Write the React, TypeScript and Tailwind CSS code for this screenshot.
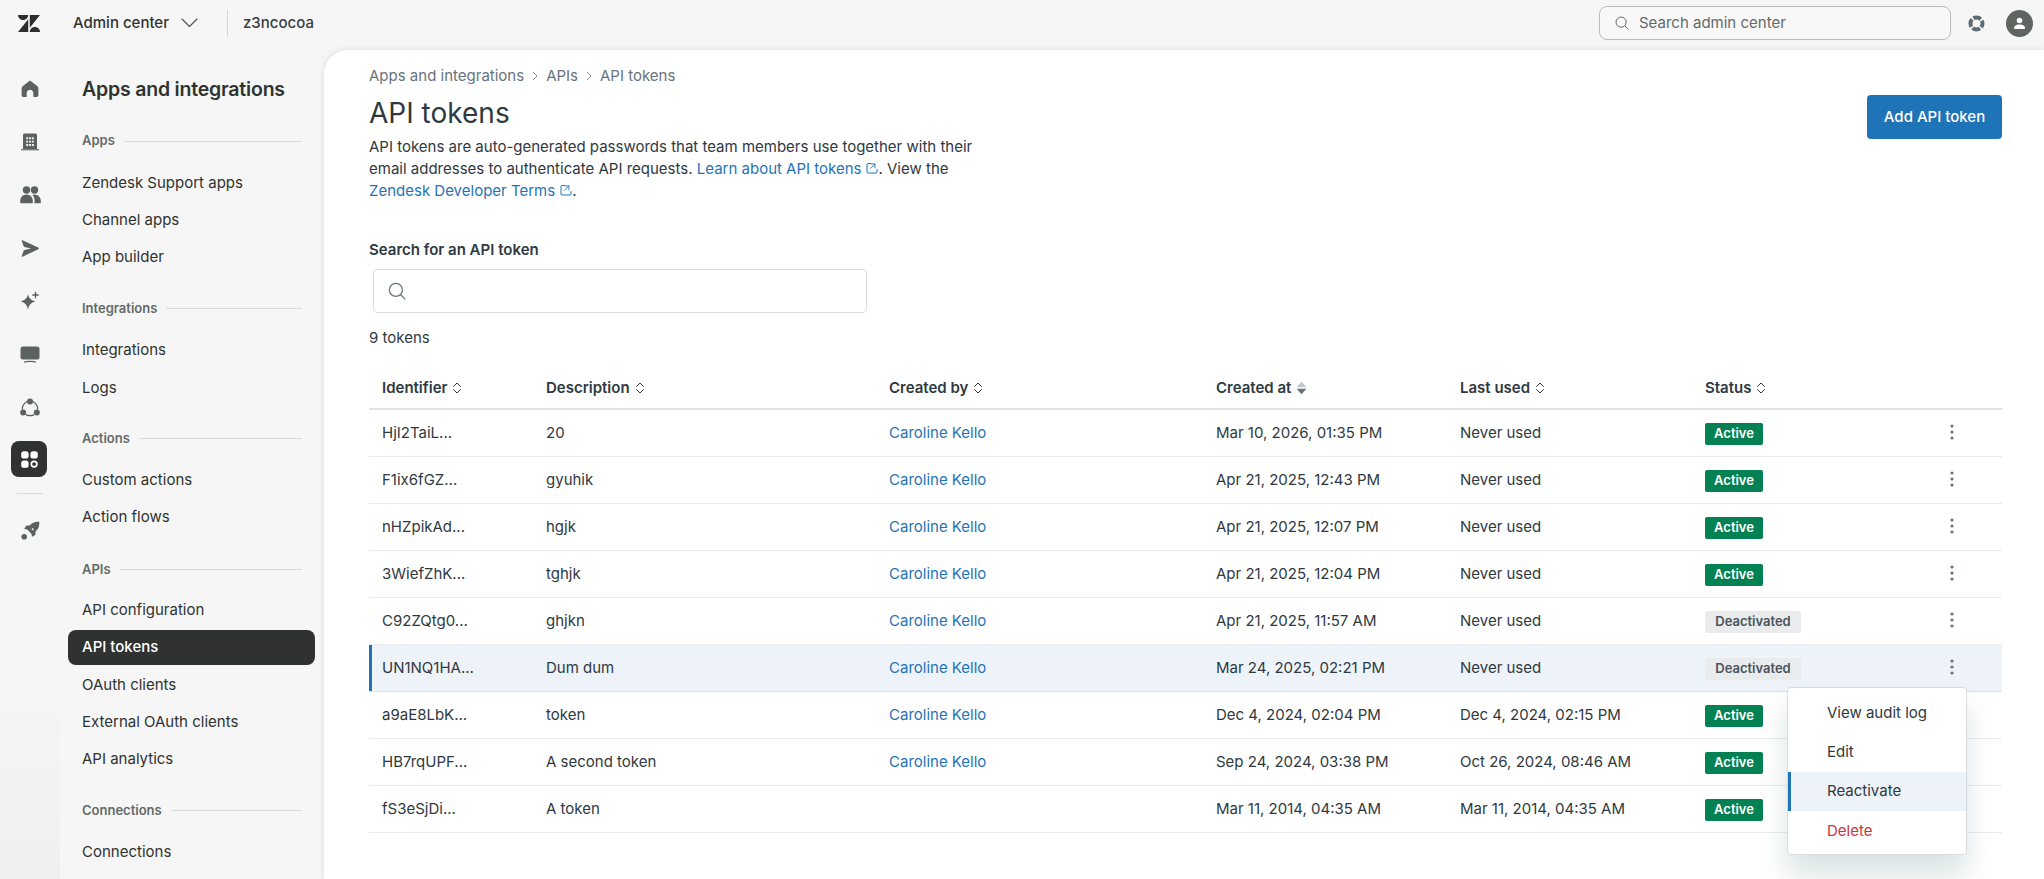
import React from "react";

const Sort = () => (
  <svg width="10" height="14" viewBox="0 0 10 14" fill="none" stroke="#2f3941" strokeWidth="1" className="ml-[5px] shrink-0">
    <path d="M1.500 5.500L5 2l3.500 3.500M1.500 8.500L5 12l3.500-3.500" strokeLinecap="round" strokeLinejoin="round" />
  </svg>
);
const SortDown = () => (
  <svg width="11" height="14" viewBox="0 0 11 14" className="ml-[5px] shrink-0">
    <path d="M5.500 .8L10.500 6.300H.5z" fill="#c2c8cc" />
    <path d="M5.500 13.200L10.500 7.700H.5z" fill="#68737d" />
  </svg>
);
const Ext = () => (
  <svg width="12" height="12" viewBox="0 0 12 12" fill="none" stroke="#1f73b7" strokeWidth="1" className="inline-block ml-[5px] -mt-[3px]">
    <path d="M4.500 1.500H2a1 1 0 00-1 1v7.500a1 1 0 001 1h8a1 1 0 001-1V7.500" strokeLinecap="round" />
    <path d="M6.500 1h4.500v4.500M11 1L6 6" transform="translate(-1 1) scale(.9)" strokeLinecap="round" />
  </svg>
);
const Search = ({ size, color }: { size: number; color: string }) => (
  <svg width={size} height={size} viewBox="0 0 16 16" fill="none" stroke={color} strokeWidth="1.100" className="shrink-0">
    <circle cx="7" cy="7" r="5.800" />
    <path d="M11.300 11.300l3.700 3.700" strokeLinecap="round" />
  </svg>
);

const I = "#5c635f";
const Home = () => (
  <svg width="18" height="18" viewBox="0 0 18 18"><path fill={I} d="M9 .6L1.600 6.200C.9 6.800.6 7.400.6 8.300V15c0 1.200.9 2.100 2 2.100h2.200c.5 0 .9-.4.9-.9v-3.100C5.700 11.200 7.200 9.800 9 9.800s3.300 1.400 3.300 3.300v3.100c0 .5.400.9.900.9h2.200c1.100 0 2-.9 2-2.100V8.300c0-.9-.3-1.500-1-2.100L9 .6z" /></svg>
);
const Building = () => (
  <svg width="20" height="18" viewBox="0 0 20 18">
    <path fill={I} d="M4.500.5h11c.8 0 1.500.7 1.500 1.500v14H3V2c0-.8.700-1.500 1.500-1.500z" />
    <path fill={I} d="M1 16.200h18v1.100H1z" />
    <path fill="#f6f6f6" d="M6.200 4.300h1.900v1.900H6.200zM9.050 4.300h1.900v1.900h-1.900zM11.900 4.300h1.900v1.900h-1.900zM6.200 7.700h1.900v1.900H6.200zM9.050 7.700h1.900v1.900h-1.900zM11.900 7.700h1.900v1.900h-1.900zM6.200 11.100h1.900v1.900H6.200zM9.050 11.100h1.900v1.900h-1.900zM11.900 11.100h1.900v1.900h-1.900z" />
  </svg>
);
const People = () => (
  <svg width="21" height="18" viewBox="0 0 21 18">
    <circle cx="6.500" cy="4" r="3.700" fill={I} />
    <circle cx="14.500" cy="4" r="3.700" fill={I} />
    <path fill={I} d="M6.500 8.500c3.500 0 6.300 2.800 6.300 6.200v1.800c0 .4-.3.700-.7.700H.9c-.4 0-.7-.3-.7-.7v-1.800c0-3.400 2.800-6.200 6.300-6.200z" />
    <path fill={I} d="M14.500 8.500c3.500 0 6.300 2.800 6.300 6.200v1.800c0 .4-.3.700-.7.700h-5.600v-3.100c0-1.900-.8-3.700-2.200-5 .7-.4 1.400-.6 2.200-.6z" />
  </svg>
);
const Send = () => (
  <svg width="18" height="17" viewBox="0 0 18 17"><path fill={I} d="M1.500.3l15.700 7.200c.8.400.8 1.400 0 1.700L1.500 16.700c-.5.200-1-.3-.8-.8l1.900-5.100c.1-.4.500-.7.900-.7l6.500-1.600L3.500 6.900c-.4-.1-.8-.4-.9-.8L.7 1.100c-.2-.5.300-1 .8-.8z" /></svg>
);
const Sparkle = () => (
  <svg width="20" height="20" viewBox="0 0 20 20">
    <path fill={I} d="M8 3.200c.8 3.500 2.500 5.600 7.200 7.200C10.500 12 8.800 14 8 18.800 7.200 14 5.500 12 .8 10.400 5.500 8.800 7.200 6.700 8 3.200z" />
    <path fill={I} d="M14.800.8h1.400v2.500h2.500v1.400h-2.500v2.500h-1.400V4.700h-2.500V3.300h2.500z" />
  </svg>
);
const Monitor = () => (
  <svg width="20" height="17" viewBox="0 0 20 17">
    <rect x=".5" y=".5" width="19" height="13" rx="2.500" fill={I} />
    <path d="M4.500 16c1.500-.8 9.500-.8 11 0" stroke={I} strokeWidth="1.200" fill="none" strokeLinecap="round" />
  </svg>
);
const Network = () => (
  <svg width="20" height="19" viewBox="0 0 20 19" fill="none">
    <circle cx="10" cy="3.500" r="3" fill={I} />
    <circle cx="3.200" cy="14.500" r="3" fill={I} />
    <circle cx="16.800" cy="14.500" r="3" fill={I} />
    <path d="M6.800 3.800C4.200 5.200 2.400 7.800 2.300 11M13.200 3.800c2.600 1.400 4.400 4 4.500 7.200M6.300 16.800c2.200 1 5.200 1 7.400 0" stroke={I} strokeWidth="1.300" strokeLinecap="round" />
  </svg>
);
const Apps = () => (
  <svg width="17" height="17" viewBox="0 0 17 17">
    <rect x=".2" y=".2" width="7.400" height="7.400" rx="2.600" fill="#fff" />
    <rect x="9.400" y=".2" width="7.400" height="7.400" rx="2.600" fill="#fff" />
    <rect x=".2" y="9.400" width="7.400" height="7.400" rx="2.600" fill="#fff" />
    <circle cx="13.100" cy="13.100" r="2.800" fill="#2f3230" stroke="#fff" strokeWidth="1.700" />
  </svg>
);
const Rocket = () => (
  <svg width="19" height="19" viewBox="0 0 19 19">
    <path fill={I} d="M18.300.7c-4-.4-7.300.9-9.500 3.600L5 4.700 3.200 7.900l3.100.7 4.100 4.100.7 3.100 3.200-1.800.4-3.800c2.700-2.200 4-5.500 3.600-9.500z" />
    <circle cx="3.200" cy="15.800" r="2.800" fill={I} />
    <path d="M11 7.500l1.500 1.500" stroke="#f6f6f6" strokeWidth="1.400" />
  </svg>
);

const Logo = () => (
  <svg width="22" height="17" viewBox="0 0 22 17" fill="#2b2e2c">
    <path d="M0 0h10.200c0 2.800-2.300 5-5.100 5S0 2.800 0 0z" />
    <path d="M10.200 4.200V17H0z" />
    <path d="M11.800 0H22L11.800 12.800z" />
    <path d="M11.800 17c0-2.800 2.300-5 5.100-5s5.100 2.200 5.100 5z" />
  </svg>
);

const Section = ({ title, items, head, gap }: { title: string; items: string[]; head: string; gap: string }) => (
  <div className={head}>
    <div className="flex items-center h-4 pl-[14px] pr-[13px] gap-[9px]">
      <span className="text-[13px] font-semibold text-[#646b67]">{title}</span>
      <span className="flex-1 h-px bg-[#d9dbdc]" />
    </div>
    <div className={gap}>
      {items.map((t) =>
        t === "API tokens" ? (
          <div key={t} className="h-[37.2px] flex items-center">
            <div className="h-[35px] w-full flex items-center pl-[14px] rounded-lg bg-[#2f3230] text-white font-medium text-[15px]">{t}</div>
          </div>
        ) : (
          <div key={t} className="h-[37.2px] flex items-center pl-[14px] text-[15px] text-[#2f3330]">{t}</div>
        )
      )}
    </div>
  </div>
);

const rows = [
  ["HjI2TaiL...", "20", true, "Mar 10, 2026, 01:35 PM", "Never used", true],
  ["F1ix6fGZ...", "gyuhik", true, "Apr 21, 2025, 12:43 PM", "Never used", true],
  ["nHZpikAd...", "hgjk", true, "Apr 21, 2025, 12:07 PM", "Never used", true],
  ["3WiefZhK...", "tghjk", true, "Apr 21, 2025, 12:04 PM", "Never used", true],
  ["C92ZQtg0...", "ghjkn", true, "Apr 21, 2025, 11:57 AM", "Never used", false],
  ["UN1NQ1HA...", "Dum dum", true, "Mar 24, 2025, 02:21 PM", "Never used", false],
  ["a9aE8LbK...", "token", true, "Dec 4, 2024, 02:04 PM", "Dec 4, 2024, 02:15 PM", true],
  ["HB7rqUPF...", "A second token", true, "Sep 24, 2024, 03:38 PM", "Oct 26, 2024, 08:46 AM", true],
  ["fS3eSjDi...", "A token", false, "Mar 11, 2014, 04:35 AM", "Mar 11, 2014, 04:35 AM", true],
] as const;

const GRID = "grid grid-cols-[164px_343px_327px_244px_245px_1fr] items-center pl-[13px]";

const Dots = () => (
  <svg width="4" height="16" viewBox="0 0 4 16" fill="#68737d" className="mb-[2px]"><circle cx="2" cy="2" r="1.600" /><circle cx="2" cy="8" r="1.600" /><circle cx="2" cy="14" r="1.600" /></svg>
);

export default function App() {
  return (
    <div className="h-[879px] w-[2044px] overflow-hidden bg-[#f6f6f6] flex flex-col text-[#2f3941] font-['Inter',sans-serif]">
      <header className="h-[50px] shrink-0 flex items-center pl-[18px] pr-[11px] pb-[4px]">
        <Logo />
        <span className="ml-[33px] text-[15px] font-medium text-[#2f3330]">Admin center</span>
        <svg width="17" height="10" viewBox="0 0 17 10" fill="none" stroke="#4a4f4c" strokeWidth="1.100" className="ml-[12px]"><path d="M1 1l7.500 7.500L16 1" strokeLinecap="round" strokeLinejoin="round" /></svg>
        <span className="ml-[29px] w-px h-[27px] bg-[#d4d6d6]" />
        <span className="ml-[15px] text-[15px] font-medium text-[#3a3e3c]">z3ncocoa</span>
        <div className="ml-auto w-[352px] h-[34px] rounded-lg border border-[#b9bcbc] flex items-center pl-[15px] gap-[10px] bg-[#f8f8f8]">
          <Search size={14} color="#5f6562" />
          <span className="text-[15px] text-[#646a67]">Search admin center</span>
        </div>
        <svg width="17" height="17" viewBox="0 0 17 17" fill="none" className="ml-[17px]">
          <circle cx="8.500" cy="8.500" r="6" stroke="#5f6b73" strokeWidth="4" strokeDasharray="7.800 1.620" strokeDashoffset="3.900" />
        </svg>
        <div className="ml-[21px] w-[27px] h-[27px] rounded-full bg-[#5f6561] flex items-center justify-center">
          <svg width="13" height="13" viewBox="0 0 13 13" fill="#fff"><circle cx="6.500" cy="3.500" r="2.800" /><path d="M2 12c-.6 0-1-.4-1-1 0-2.200 2.400-3.600 5.500-3.600S12 8.800 12 11c0 .6-.4 1-1 1z" /></svg>
        </div>
      </header>
      <div className="flex-1 flex min-h-0">
        <nav className="w-[60px] shrink-0 pt-[21px] flex flex-col items-center bg-gradient-to-b from-[#f6f6f6] from-75% to-[#efefef]">
          {[Home, Building, People, Send, Sparkle, Monitor, Network].map((Ic, i) => (
            <div key={i} className="h-[36px] w-[36px] mb-[17px] flex items-center justify-center"><Ic /></div>
          ))}
          <div className="h-[36px] w-[36px] rounded-lg bg-[#2f3230] flex items-center justify-center -mt-[1px] -translate-x-[1px]"><Apps /></div>
          <div className="w-[26px] h-px bg-[#d9dbdc] mt-[16px]" />
          <div className="h-[36px] w-[36px] mt-[18px] flex items-center justify-center"><Rocket /></div>
        </nav>
        <aside className="w-[264px] shrink-0 pl-[8px] pr-[9px] pt-[26px]">
          <div className="pl-[14px] h-7 flex items-center text-[19.5px] font-semibold text-[#2f3330] tracking-[-0.2px]">Apps and integrations</div>
          <Section head="mt-[29px]" gap="mt-[15.5px]" title="Apps" items={["Zendesk Support apps", "Channel apps", "App builder"]} />
          <Section head="mt-[24.5px]" gap="mt-[15.5px]" title="Integrations" items={["Integrations", "Logs"]} />
          <Section head="mt-[24.5px]" gap="mt-[14.5px]" title="Actions" items={["Custom actions", "Action flows"]} />
          <Section head="mt-[25.5px]" gap="mt-[14.5px]" title="APIs" items={["API configuration", "API tokens", "OAuth clients", "External OAuth clients", "API analytics"]} />
          <Section head="mt-[25px]" gap="mt-[14.5px]" title="Connections" items={["Connections"]} />
        </aside>
        <main className="relative flex-1 min-w-0 bg-white rounded-tl-3xl shadow-[0_0_6px_rgba(0,0,0,0.12)] pl-[45px] pr-[42px] pt-[16px] text-[15px]">
          <div className="h-5 flex items-center gap-[8px] text-[#68737d]">
            <span>Apps and integrations</span>
            <svg width="6" height="10" viewBox="0 0 6 10" fill="none" stroke="#87929d"><path d="M1 1l4 4-4 4" /></svg>
            <span>APIs</span>
            <svg width="6" height="10" viewBox="0 0 6 10" fill="none" stroke="#87929d"><path d="M1 1l4 4-4 4" /></svg>
            <span>API tokens</span>
          </div>
          <div className="mt-[9px] flex justify-between items-start">
            <div>
              <h1 className="h-9 flex items-center text-[28px] font-normal text-[#2f3941]">API tokens</h1>
              <p className="mt-[5px] w-[640px] leading-[22px] text-[#2f3941]">
                API tokens are auto-generated passwords that team members use together with their<br />
                email addresses to authenticate API requests. <span className="text-[#1f73b7]">Learn about API tokens<Ext /></span>. View the<br />
                <span className="text-[#1f73b7]">Zendesk Developer Terms<Ext /></span>.
              </p>
            </div>
            <button className="w-[135px] h-[44px] rounded-[4px] bg-[#1f73b7] text-white font-medium">Add API token</button>
          </div>
          <div className="mt-[38px] h-5 flex items-center font-semibold">Search for an API token</div>
          <div className="mt-[9px] ml-1 w-[494px] h-[44px] rounded-[4px] border border-[#d8dcde] flex items-center pl-[14px]">
            <Search size={18} color="#68737d" />
          </div>
          <div className="mt-[15px] h-5 flex items-center">9 tokens</div>
          <div className="mt-[20px]">
            <div className={`${GRID} h-[42px] border-b-2 border-[#e0e3e5] font-semibold`}>
              {["Identifier", "Description", "Created by", "Created at", "Last used", "Status"].map((h) => (
                <div key={h} className="flex items-center">{h}{h === "Created at" ? <SortDown /> : <Sort />}</div>
              ))}
            </div>
            {rows.map((r, i) => (
              <div key={r[0]} className={`${GRID} h-[47px] border-b border-[#e9ebed] ${i === 5 ? "bg-[#edf3f9] border-b-[#d6e4f0] shadow-[inset_3px_0_0_#1f73b7]" : ""}`}>
                <div>{r[0]}</div>
                <div>{r[1]}</div>
                <div className="text-[#1f73b7]">{r[2] ? "Caroline Kello" : ""}</div>
                <div>{r[3]}</div>
                <div>{r[4]}</div>
                <div className="flex items-center justify-between pr-[48px]">
                  {r[5] ? (
                    <span className="mt-[2px] h-[22px] w-[58px] rounded-[2px] bg-[#038153] text-white text-[13px] font-semibold flex items-center justify-center">Active</span>
                  ) : (
                    <span className="mt-[2px] h-[22px] w-[96px] rounded-[2px] bg-[#e9ebed] text-[#49545c] text-[13px] font-semibold flex items-center justify-center">Deactivated</span>
                  )}
                  <Dots />
                </div>
              </div>
            ))}
          </div>
          <div className="absolute left-[1463px] top-[637px] w-[180px] h-[168px] pt-[5px] rounded-[4px] bg-white border border-[#d8dcde] shadow-[0_20px_28px_rgba(4,68,77,0.15)] text-[#2f3941]">
            <div className="h-10 flex items-center pl-[39px]">View audit log</div>
            <div className="h-[39px] flex items-center pl-[39px]">Edit</div>
            <div className="h-[39px] flex items-center pl-[39px] bg-[#edf3f9] shadow-[inset_3px_0_0_#1f73b7]">Reactivate</div>
            <div className="h-10 flex items-center pl-[39px] text-[#cc3340]">Delete</div>
          </div>
        </main>
      </div>
    </div>
  );
}
